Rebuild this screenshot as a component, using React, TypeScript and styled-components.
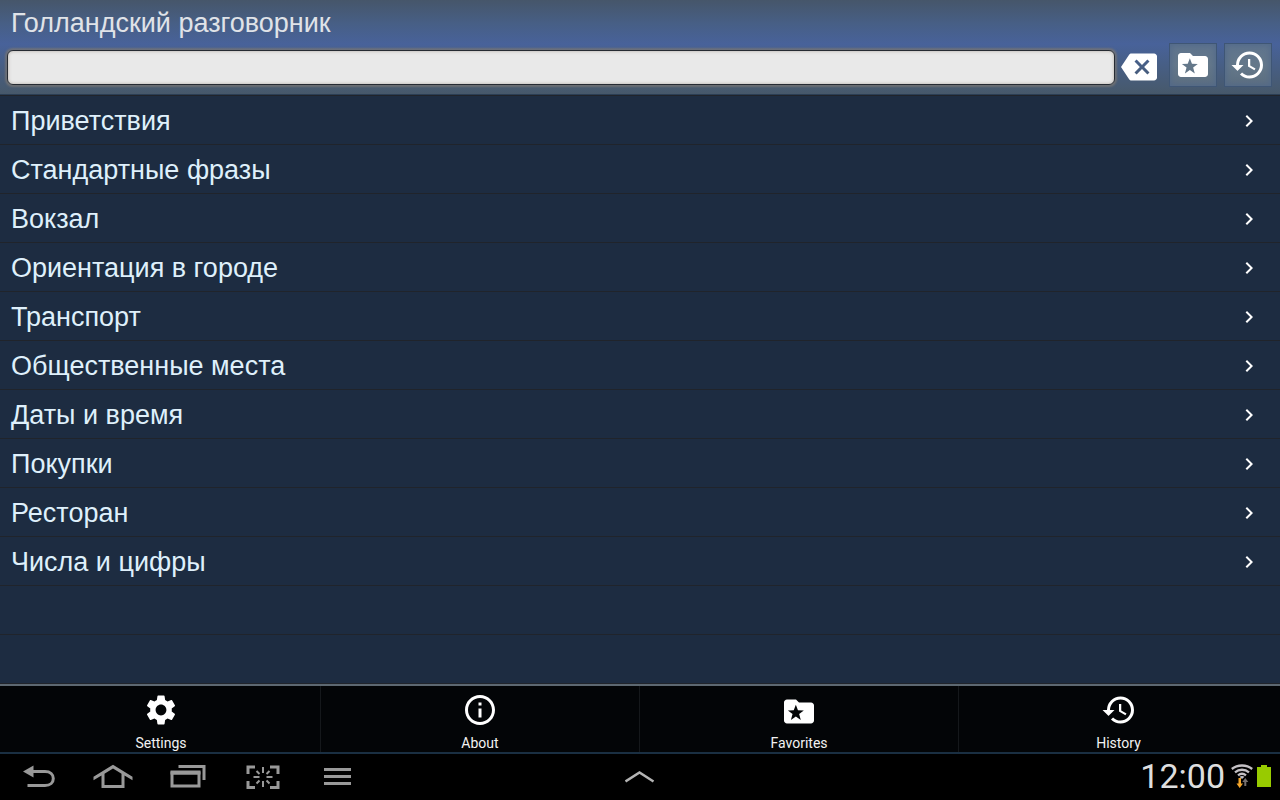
import React from "react";
import styled, { createGlobalStyle } from "styled-components";
import { MdSettings, MdInfoOutline, MdHistory, MdBackspace, MdChevronRight } from "react-icons/md";

const GlobalStyle = createGlobalStyle`
  *, *::before, *::after { box-sizing: border-box; }
  body { margin: 0; background: #000; }
`;

const Screen = styled.div`
  display: flex;
  flex-direction: column;
  min-height: 100vh;
  font-family: "Liberation Sans", Arial, sans-serif;
`;

const Header = styled.header`
  background: linear-gradient(#46566a 0, #475f86 24px, #48629a 44px, #475f88 62px, #475a70 88px, #46586a 100%);
  border-bottom: 1px solid #2b3e54;
`;

const Title = styled.h1`
  margin: 0;
  height: 43px;
  padding: 0 11px;
  font-size: 27px;
  font-weight: 400;
  line-height: 46px;
  color: #e0e3e8;
`;

const SearchRow = styled.form`
  display: flex;
  gap: 7px;
  padding: 0 8px 7px 7px;
`;

const Field = styled.div`
  flex: 1;
  display: flex;
  align-items: center;
  gap: 6px;
  padding-top: 4px;
  margin-right: 5px;
`;

const SearchInput = styled.input`
  flex: 1;
  min-width: 0;
  height: 35px;
  padding: 0 8px;
  border: 1px solid #262b33;
  border-radius: 6px;
  background: #e9e9e9;
  box-shadow: 0 0 2px 2px rgba(120, 118, 115, 0.75), inset 0 0 3px 1px #c9c5c1;
  font: 22px "Liberation Sans", Arial, sans-serif;
  color: #222;
  outline: none;
`;

const IconButton = styled.button<{ $framed?: boolean }>`
  display: flex;
  align-items: center;
  justify-content: center;
  flex: none;
  width: ${(p) => (p.$framed ? "48px" : "36px")};
  height: ${(p) => (p.$framed ? "44px" : "36px")};
  padding: 0;
  border: ${(p) => (p.$framed ? "1px solid #3f5675" : "0")};
  background: ${(p) => (p.$framed ? "linear-gradient(#5f748e, #64788a 50%, #5c6e80)" : "none")};
  box-shadow: ${(p) => (p.$framed ? "inset 0 0 6px 1px #52698a" : "none")};
  color: #fff;
`;

const Topics = styled.ul`
  flex: 1;
  margin: 0;
  padding: 0;
  list-style: none;
  background: linear-gradient(#1d2c41 48px, #20242b 48px) 0 1px / 100% 49px;
`;

const TopicLink = styled.a`
  display: flex;
  align-items: center;
  justify-content: space-between;
  height: 49px;
  padding: 2px 19px 0 11px;
  font-size: 27px;
  line-height: 32px;
  color: #dff0fb;
  text-decoration: none;

  svg { color: #fff; }
`;

const Menu = styled.nav`
  display: grid;
  grid-template-columns: repeat(4, 1fr);
  padding: 0 2px;
  background: #030507;
  border-top: 2px solid #5d6871;
  border-bottom: 2px solid #1a2f42;
`;

const MenuButton = styled.button`
  display: flex;
  flex-direction: column;
  align-items: center;
  gap: 6px;
  height: 66px;
  padding: 6px 0 0;
  border: 0;
  border-right: 1px solid #15181b;
  background: none;
  font: 14px/18px Roboto, sans-serif;
  color: #f2f2f2;

  &:last-child { border-right: 0; }
  svg { color: #fff; }
`;

const SystemBar = styled.footer`
  display: grid;
  grid-template-columns: 1fr auto 1fr;
  height: 46px;
  background: #000;
`;

const SystemKeys = styled.div`
  display: flex;
`;

const SystemKey = styled.button<{ $wide?: boolean }>`
  display: flex;
  align-items: center;
  justify-content: center;
  width: ${(p) => (p.$wide ? "75px" : "48px")};
  padding: 0;
  border: 0;
  background: none;
  color: #999;
`;

const Status = styled.div`
  display: flex;
  align-items: center;
  justify-content: flex-end;
  gap: 4px;
  padding: 0 9px 2px 0;
`;

const Clock = styled.time`
  padding-right: 2px;
  font: 34px/44px Roboto, sans-serif;
  color: #dedede;
`;

const FolderStar = ({ low = false }: { low?: boolean }) => (
  <svg width="36" height="36" viewBox={low ? "0 -1 24 24" : "0 0 24 24"} fill="currentColor" fillRule="evenodd" aria-hidden="true">
    <path d="M20 6h-8l-2-2H4c-1.100 0-2 .9-2 2v12c0 1.100.9 2 2 2h16c1.100 0 2-.9 2-2V8c0-1.100-.9-2-2-2zM9.900 7.500l1.400 3.600 3.900.2-3.100 2.400 1.100 3.900-3.300-2.200-3.300 2.200 1.100-3.900-3.100-2.400 3.900-.2z" />
  </svg>
);

const BackGlyph = () => (
  <svg width="40" height="28" viewBox="0 0 40 28" fill="none" stroke="currentColor" strokeWidth="3" aria-hidden="true">
    <path d="M13 8.500h14c5.500 0 8.300 3 8.300 7s-2.800 7-8.300 7H9.500" />
    <path d="M5 8.500l10.500-6v12z" fill="currentColor" stroke="none" />
  </svg>
);

const HomeGlyph = () => (
  <svg width="40" height="28" viewBox="0 0 40 28" fill="currentColor" aria-hidden="true">
    <path d="M20 1.700l19.500 12v3.600L31.500 12.600V25h-23V12.600L.5 17.300v-3.600zM20 5.500l-8.500 5.200V22h17V10.700z" fillRule="evenodd" />
  </svg>
);

const RecentGlyph = () => (
  <svg width="40" height="28" viewBox="0 0 40 28" fill="none" stroke="currentColor" aria-hidden="true">
    <path d="M4 10h27v13H4z" strokeWidth="3" />
    <path d="M2.500 9.500h30" strokeWidth="4" />
    <path d="M10.500 3.500h25.500v13.500" strokeWidth="3" />
  </svg>
);

const CaptureGlyph = () => (
  <svg width="40" height="28" viewBox="0 0 40 28" fill="none" stroke="currentColor" aria-hidden="true">
    <path d="M5 11V4h7M27 4h8v7M5 18v6.500h7M27 24.500h8V18" strokeWidth="3" />
    <path d="M20 4v6M20 18v6M10.500 14h6M23.500 14h6M13.500 8l3 3M26.500 8l-3 3M13.500 20.500l3-3M26.500 20.500l-3-3" strokeWidth="2" />
  </svg>
);

const MenuGlyph = () => (
  <svg width="40" height="28" viewBox="0 0 40 28" fill="currentColor" aria-hidden="true">
    <path d="M6 5h27v3H6zM6 12h27v3H6zM6 19h27v3H6z" />
  </svg>
);

const CaretGlyph = () => (
  <svg width="30" height="28" viewBox="0 0 30 28" fill="none" stroke="#b4b4b4" strokeWidth="2.500" aria-hidden="true">
    <path d="M.5 18.500L14.500 9.500l14 9" />
  </svg>
);

const WifiGlyph = () => (
  <svg width="22" height="26" viewBox="0 0 22 26" fill="none" aria-hidden="true">
    <g stroke="#c4c0c4" strokeWidth="2.300">
      <path d="M.8 6C6.500 1.300 15.500 1.300 21.200 6" />
      <path d="M4 9.300c4-3.400 10-3.400 14 0" />
      <path d="M7 12.400c2.400-2 5.600-2 8 0" />
    </g>
    <path d="M11 16l-2.500-2.300c1.600-1.100 3.400-1.100 5 0z" fill="#c4c0c4" />
    <path d="M7.500 15h2.500v5.500h2L8.700 25l-3.200-4.500h2z" fill="#f5a62a" />
    <path d="M14.300 15l3 4h-2v4h-2v-4h-2z" fill="#77706e" />
  </svg>
);

const BatteryGlyph = () => (
  <svg width="14" height="22" viewBox="0 0 14 22" fill="#98cb00" aria-hidden="true">
    <path d="M4 0h6v2h4v20H0V2h4z" />
  </svg>
);

const topics = [
  "Приветствия",
  "Стандартные фразы",
  "Вокзал",
  "Ориентация в городе",
  "Транспорт",
  "Общественные места",
  "Даты и время",
  "Покупки",
  "Ресторан",
  "Числа и цифры",
];

const menuItems = [
  { label: "Settings", icon: <MdSettings size={36} /> },
  { label: "About", icon: <MdInfoOutline size={36} /> },
  { label: "Favorites", icon: <FolderStar low /> },
  { label: "History", icon: <MdHistory size={36} /> },
];

const systemKeys = [
  { label: "Back", icon: <BackGlyph /> },
  { label: "Home", icon: <HomeGlyph /> },
  { label: "Recent apps", icon: <RecentGlyph /> },
  { label: "Screenshot", icon: <CaptureGlyph /> },
  { label: "Menu", icon: <MenuGlyph /> },
];

export default function App() {
  return (
    <Screen>
      <GlobalStyle />
      <Header>
        <Title>Голландский разговорник</Title>
        <SearchRow role="search" onSubmit={(e) => e.preventDefault()}>
          <Field>
            <SearchInput type="text" aria-label="Поиск" />
            <IconButton type="reset" aria-label="Очистить">
              <MdBackspace size={36} />
            </IconButton>
          </Field>
          <IconButton type="button" $framed aria-label="Избранное">
            <FolderStar />
          </IconButton>
          <IconButton type="button" $framed aria-label="История">
            <MdHistory size={36} />
          </IconButton>
        </SearchRow>
      </Header>
      <Topics>
        {topics.map((topic) => (
          <li key={topic}>
            <TopicLink href="#">
              {topic}
              <MdChevronRight size={24} />
            </TopicLink>
          </li>
        ))}
      </Topics>
      <Menu>
        {menuItems.map((item) => (
          <MenuButton key={item.label} type="button">
            {item.icon}
            {item.label}
          </MenuButton>
        ))}
      </Menu>
      <SystemBar>
        <SystemKeys>
          {systemKeys.map((key) => (
            <SystemKey key={key.label} type="button" $wide aria-label={key.label}>
              {key.icon}
            </SystemKey>
          ))}
        </SystemKeys>
        <SystemKey type="button" aria-label="Tray">
          <CaretGlyph />
        </SystemKey>
        <Status>
          <Clock>12:00</Clock>
          <WifiGlyph />
          <BatteryGlyph />
        </Status>
      </SystemBar>
    </Screen>
  );
}
